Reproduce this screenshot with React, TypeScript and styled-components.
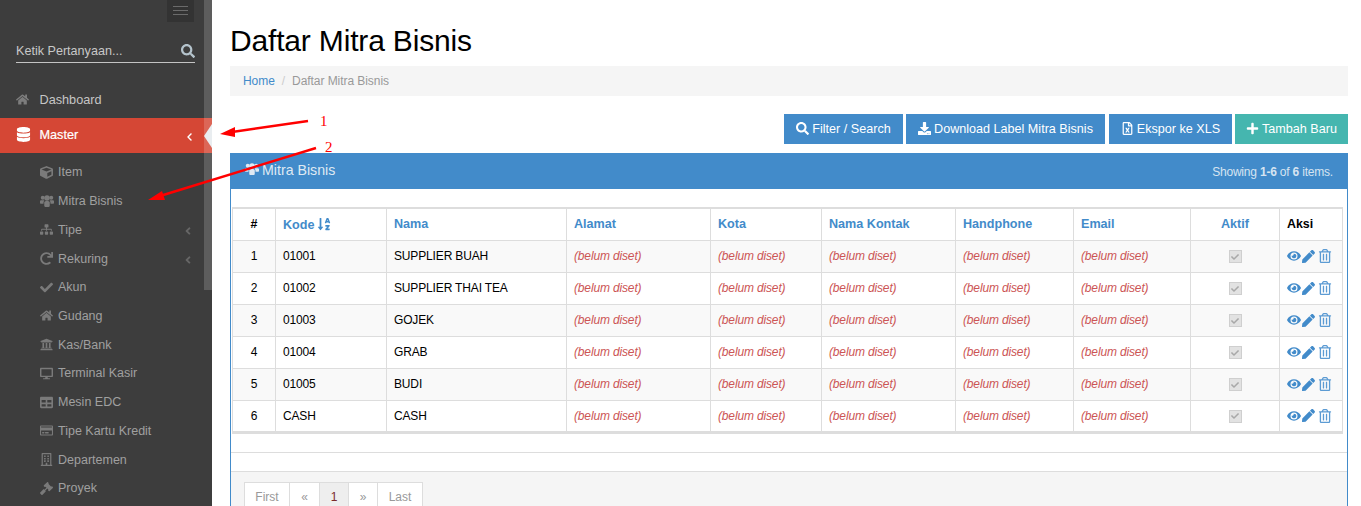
import React from "react";
import styled, { createGlobalStyle } from "styled-components";
import {
  FaHome, FaDatabase, FaCube, FaSitemap, FaRedo, FaCheck, FaUniversity, FaDesktop,
  FaTable, FaRegCreditCard, FaRegBuilding, FaGavel, FaSearch, FaDownload, FaRegFileExcel,
  FaPlus, FaSortAlphaDown, FaEye, FaPen, FaRegTrashAlt, FaChevronLeft, FaAngleLeft,
} from "react-icons/fa";

const Global = createGlobalStyle`
  html, body { margin: 0; padding: 0; height: 100%; overflow: hidden; background: #fff; }
  body { font-family: "Liberation Sans", Arial, sans-serif; font-size: 12px; color: #000; }
`;

const Page = styled.div`
  position: relative;
  display: flex;
  width: 1361px;
  height: 506px;
  overflow: hidden;
`;

const Sidebar = styled.aside`
  position: relative;
  flex: 0 0 212px;
  background: #3d3d3d;
  overflow: hidden;
`;

const Scrollbar = styled.div`
  position: absolute;
  top: 0;
  right: 0;
  width: 8px;
  height: 290px;
  background: rgba(255, 255, 255, 0.17);
`;

const Notch = styled.div`
  position: absolute;
  top: 124px;
  right: 0;
  width: 0;
  height: 0;
  border-style: solid;
  border-width: 12px 8px 12px 0;
  border-color: transparent #e9edf0 transparent transparent;
`;

const ToggleRow = styled.div`
  display: flex;
  justify-content: flex-end;
  padding-right: 18px;
`;

const Toggle = styled.div`
  width: 27px;
  height: 22px;
  background: #333;
  display: flex;
  flex-direction: column;
  align-items: center;
  justify-content: center;
  gap: 3px;
  padding-bottom: 1px;
  box-sizing: border-box;
`;

const ToggleLine = styled.span`
  display: block;
  width: 15px;
  height: 1px;
  background: #6b6b6b;
`;

const SearchBox = styled.div`
  margin: 18px 17px 0 16px;
  height: 21px;
  padding-bottom: 1px;
  border-bottom: 1px solid #c4c4c4;
  display: flex;
  align-items: center;
  justify-content: space-between;
  color: #c8c8c8;
  font-size: 12.6px;
  svg { color: #b4c3cc; font-size: 14px; }
`;

const TopNav = styled.nav`
  margin-top: 20px;
`;

const TopItem = styled.div<{ $active?: boolean }>`
  height: 35px;
  box-sizing: border-box;
  padding: 0 16px 2px;
  display: flex;
  align-items: center;
  font-size: 12.7px;
  color: ${(p) => (p.$active ? "#fff" : "#c6c6c6")};
  background: ${(p) => (p.$active ? "#d54735" : "transparent")};
  position: relative;
  -webkit-text-stroke: ${(p) => (p.$active ? "0.2px #fff" : "0")};
`;

const TopIcon = styled.span<{ $active?: boolean }>`
  flex: 0 0 23.5px;
  display: flex;
  align-items: center;
  font-size: ${(p) => (p.$active ? 15 : 13)}px;
  color: ${(p) => (p.$active ? "#fff" : "#7d7d7d")};
`;

const Chevron = styled.span<{ $active?: boolean }>`
  position: absolute;
  right: 18px;
  top: 50%;
  transform: translateY(-50%);
  margin-top: 1px;
  display: flex;
  font-size: ${(p) => (p.$active ? 9 : 12)}px;
  color: ${(p) => (p.$active ? "#fff" : "#666")};
`;

const SubList = styled.div`
  padding-top: 5px;
`;

const SubItem = styled.div`
  height: 28.73px;
  display: flex;
  align-items: center;
  padding-left: 40px;
  position: relative;
  font-size: 12.5px;
  color: #a0a0a0;
`;

const SubIcon = styled.span`
  flex: 0 0 18px;
  display: flex;
  align-items: center;
  font-size: 13px;
  color: #7a7a7a;
`;

const Main = styled.main`
  flex: 1;
  padding: 0 13px 0 18px;
  min-width: 0;
`;

const Title = styled.h1`
  margin: 22px 0 0;
  height: 44px;
  line-height: 37px;
  font-size: 30px;
  font-weight: 400;
  color: #000;
  letter-spacing: -0.17px;
`;

const Crumbs = styled.div`
  height: 30px;
  background: #f5f5f5;
  display: flex;
  align-items: center;
  padding-left: 13px;
  gap: 7px;
  color: #999;
  font-size: 12px;
  letter-spacing: -0.06px;
`;

const CrumbLink = styled.a`
  color: #428bca;
`;

const CrumbSep = styled.span`
  color: #ccc;
`;

const Toolbar = styled.div`
  display: flex;
  justify-content: flex-end;
  margin-top: 18px;
`;

const ActionButton = styled.div<{ $w: number; $ml: number; $green?: boolean }>`
  width: ${(p) => p.$w}px;
  margin-left: ${(p) => p.$ml}px;
  height: 30px;
  padding-bottom: 1px;
  box-sizing: border-box;
  display: flex;
  align-items: center;
  justify-content: center;
  gap: 3px;
  font-size: 12.6px;
  color: #fff;
  background: ${(p) => (p.$green ? "#45b6af" : "#428bca")};
  white-space: nowrap;
  svg { font-size: 13px; }
`;

const Panel = styled.section`
  margin-top: 9px;
  border: 1px solid #428bca;
  border-top: 0;
  border-bottom: 0;
  height: 360px;
  box-sizing: border-box;
`;

const PanelHead = styled.div`
  height: 36px;
  margin: 0 -1px;
  background: #428bca;
  display: flex;
  align-items: center;
  justify-content: space-between;
  padding: 0 15px;
  color: #dfe9f3;
`;

const PanelTitle = styled.div`
  display: flex;
  align-items: center;
  gap: 3px;
  font-size: 14.2px;
  padding-bottom: 3px;
`;

const Summary = styled.div`
  font-size: 12px;
  padding-top: 1px;
  color: #d6e4f1;
  letter-spacing: -0.2px;
  b { font-weight: 700; }
`;

const Table = styled.table`
  margin: 18px 0 0 1px;
  width: 1110px;
  table-layout: fixed;
  border-collapse: collapse;
  border-top: 2px solid #ddd;
  border-bottom: 3px solid #ddd;
  font-size: 12px;
  letter-spacing: -0.15px;
`;

const Th = styled.th<{ $center?: boolean; $plain?: boolean }>`
  height: 32px;
  padding: 0 7px;
  border: 1px solid #ddd;
  border-top: 0;
  text-align: ${(p) => (p.$center ? "center" : "left")};
  font-weight: 700;
  color: ${(p) => (p.$plain ? "#000" : "#428bca")};
  box-sizing: border-box;
  white-space: nowrap;
  font-size: ${(p) => (p.$plain ? 12.4 : 12.6)}px;
  letter-spacing: 0;
`;

const SortIcon = styled.span`
  display: inline-flex;
  vertical-align: -2px;
  margin-left: 3px;
  font-size: 14px;
`;

const Row = styled.tr<{ $odd: boolean }>`
  background: ${(p) => (p.$odd ? "#f9f9f9" : "#fff")};
`;

const Td = styled.td<{ $center?: boolean }>`
  height: 32px;
  box-sizing: border-box;
  border: 1px solid #ddd;
  padding: 0 7px;
  text-align: ${(p) => (p.$center ? "center" : "left")};
  color: #000;
  white-space: nowrap;
`;

const NotSet = styled.span`
  font-style: italic;
  color: #c55;
`;

const FakeCheck = styled.span`
  display: inline-flex;
  align-items: center;
  justify-content: center;
  width: 13px;
  height: 13px;
  box-sizing: border-box;
  vertical-align: middle;
  background: #e2e2e2;
  border: 1px solid #cfcfcf;
  svg { font-size: 8px; color: #a8a8a8; }
`;

const Actions = styled.div`
  display: flex;
  align-items: center;
  gap: 1px;
  color: #428bca;
  svg { display: block; }
`;

const TrashWrap = styled.span`
  display: flex;
  margin-left: 2px;
  color: #5c9bd3;
`;

const Spacer = styled.div`
  height: 18px;
  border-bottom: 1px solid #ddd;
`;

const PanelFoot = styled.div`
  height: 40px;
  background: #f5f5f5;
  padding: 10px 0 0 14px;
`;

const Pager = styled.div`
  display: flex;
`;

const PageCell = styled.span<{ $w: number; $active?: boolean }>`
  width: ${(p) => p.$w}px;
  height: 30px;
  box-sizing: border-box;
  border: 1px solid #ddd;
  margin-left: -1px;
  display: flex;
  align-items: center;
  justify-content: center;
  background: ${(p) => (p.$active ? "#eee" : "#fff")};
  color: ${(p) => (p.$active ? "#7a2a2a" : "#999")};
  font-size: 12px;
`;

const Overlay = styled.svg`
  position: absolute;
  inset: 0;
  width: 1361px;
  height: 506px;
  pointer-events: none;
  text {
    font-family: "Liberation Serif", serif;
    font-size: 15px;
    fill: #f00;
  }
`;

const UsersIcon = ({ size = 14 }: { size?: number }) => (
  <svg width={size} height={size * 0.86} viewBox="0 0 28 24" fill="currentColor" style={{ display: "block" }}>
    <circle cx="5.5" cy="5.500" r="4" />
    <circle cx="22.5" cy="5.500" r="4" />
    <circle cx="14" cy="6" r="5.5" />
    <path d="M0 12.5C0 11 1.2 10.5 3 10.5h4c.6 0 1.2.2 1.7.5C8 12 7 13.5 7 15.5v2H1.5C.6 17.5 0 17 0 16z" />
    <path d="M28 12.5c0-1.500-1.200-2-3-2h-4c-.6 0-1.200.2-1.700.5.7 1 1.700 2.500 1.700 4.500v2h5.500c.9 0 1.500-.5 1.500-1.500z" />
    <path d="M8.5 15.5c0-2 1.500-3.500 3.500-3.500h4c2 0 3.500 1.500 3.500 3.500v6c0 1.500-1 2.500-2.500 2.500h-6c-1.500 0-2.500-1-2.500-2.500z" />
  </svg>
);

const subItems: [string, React.ReactNode, boolean?][] = [
  ["Item", <FaCube />],
  ["Mitra Bisnis", <UsersIcon />],
  ["Tipe", <FaSitemap />, true],
  ["Rekuring", <FaRedo />, true],
  ["Akun", <FaCheck />],
  ["Gudang", <FaHome />],
  ["Kas/Bank", <FaUniversity />],
  ["Terminal Kasir", <FaDesktop />],
  ["Mesin EDC", <FaTable />],
  ["Tipe Kartu Kredit", <FaRegCreditCard />],
  ["Departemen", <FaRegBuilding />],
  ["Proyek", <FaGavel />],
];

const rows = [
  ["1", "01001", "SUPPLIER BUAH"],
  ["2", "01002", "SUPPLIER THAI TEA"],
  ["3", "01003", "GOJEK"],
  ["4", "01004", "GRAB"],
  ["5", "01005", "BUDI"],
  ["6", "CASH", "CASH"],
];

const widths = [43, 111, 180, 144, 111, 134, 118, 117, 89, 63];

export default function App() {
  return (
    <Page>
      <Global />
      <Sidebar>
        <ToggleRow>
          <Toggle>
            <ToggleLine />
            <ToggleLine />
            <ToggleLine />
          </Toggle>
        </ToggleRow>
        <SearchBox>
          <span>Ketik Pertanyaan...</span>
          <FaSearch />
        </SearchBox>
        <TopNav>
          <TopItem>
            <TopIcon><FaHome /></TopIcon>Dashboard
          </TopItem>
          <TopItem $active>
            <TopIcon $active><FaDatabase /></TopIcon>Master
            <Chevron $active><FaChevronLeft /></Chevron>
          </TopItem>
          <SubList>
            {subItems.map(([label, icon, more]) => (
              <SubItem key={label}>
                <SubIcon>{icon}</SubIcon>
                {label}
                {more && <Chevron><FaAngleLeft /></Chevron>}
              </SubItem>
            ))}
          </SubList>
        </TopNav>
        <Scrollbar />
        <Notch />
      </Sidebar>
      <Main>
        <Title>Daftar Mitra Bisnis</Title>
        <Crumbs>
          <CrumbLink>Home</CrumbLink>
          <CrumbSep>/</CrumbSep>
          <span>Daftar Mitra Bisnis</span>
        </Crumbs>
        <Toolbar>
          <ActionButton $w={119} $ml={0}><FaSearch />Filter / Search</ActionButton>
          <ActionButton $w={199} $ml={3}><FaDownload />Download Label Mitra Bisnis</ActionButton>
          <ActionButton $w={123} $ml={4}><FaRegFileExcel />Ekspor ke XLS</ActionButton>
          <ActionButton $w={113} $ml={3} $green><FaPlus />Tambah Baru</ActionButton>
        </Toolbar>
        <Panel>
          <PanelHead>
            <PanelTitle><UsersIcon size={14} />Mitra Bisnis</PanelTitle>
            <Summary>Showing <b>1-6</b> of <b>6</b> items.</Summary>
          </PanelHead>
          <Table>
            <colgroup>
              {widths.map((w, i) => <col key={i} style={{ width: w }} />)}
            </colgroup>
            <thead>
              <tr>
                <Th $center $plain>#</Th>
                <Th>Kode<SortIcon><FaSortAlphaDown /></SortIcon></Th>
                <Th>Nama</Th>
                <Th>Alamat</Th>
                <Th>Kota</Th>
                <Th>Nama Kontak</Th>
                <Th>Handphone</Th>
                <Th>Email</Th>
                <Th $center>Aktif</Th>
                <Th $plain>Aksi</Th>
              </tr>
            </thead>
            <tbody>
              {rows.map((r, i) => (
                <Row key={r[0]} $odd={i % 2 === 0}>
                  <Td $center>{r[0]}</Td>
                  <Td>{r[1]}</Td>
                  <Td>{r[2]}</Td>
                  <Td><NotSet>(belum diset)</NotSet></Td>
                  <Td><NotSet>(belum diset)</NotSet></Td>
                  <Td><NotSet>(belum diset)</NotSet></Td>
                  <Td><NotSet>(belum diset)</NotSet></Td>
                  <Td><NotSet>(belum diset)</NotSet></Td>
                  <Td $center><FakeCheck><FaCheck /></FakeCheck></Td>
                  <Td>
                    <Actions>
                      <FaEye size={14} />
                      <FaPen size={13} />
                      <TrashWrap><FaRegTrashAlt size={14} /></TrashWrap>
                    </Actions>
                  </Td>
                </Row>
              ))}
            </tbody>
          </Table>
          <Spacer />
          <Spacer />
          <PanelFoot>
            <Pager>
              <PageCell $w={46}>First</PageCell>
              <PageCell $w={31}>«</PageCell>
              <PageCell $w={30} $active>1</PageCell>
              <PageCell $w={30}>»</PageCell>
              <PageCell $w={46}>Last</PageCell>
            </Pager>
          </PanelFoot>
        </Panel>
      </Main>
      <Overlay viewBox="0 0 1361 506">
        <line x1="308" y1="121" x2="232" y2="132" stroke="#f00" strokeWidth="2.4" />
        <polygon points="220,134 235,127 235,137" fill="#f00" />
        <line x1="316" y1="148" x2="160" y2="196" stroke="#f00" strokeWidth="2.4" />
        <polygon points="148,200 162,191 165,200" fill="#f00" />
        <text x="320" y="126">1</text>
        <text x="325" y="152">2</text>
      </Overlay>
    </Page>
  );
}
